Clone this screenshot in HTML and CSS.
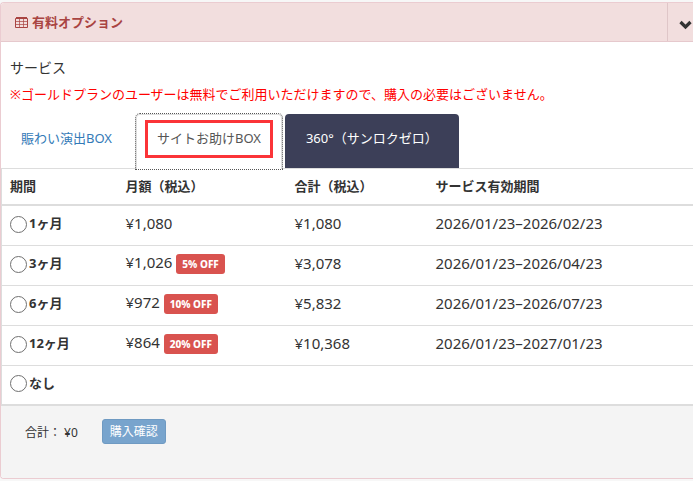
FILE: index.html
```html
<!DOCTYPE html>
<html lang="ja">
<head>
    <meta charset="UTF-8">
    <meta name="viewport" content="width=device-width, initial-scale=1.0">
    <title>有料オプション</title>
    <link rel="stylesheet" href="styles.css">
</head>
<body>

<section class="panel">
    <header class="panel-heading">
        <svg class="icon-table" viewBox="0 0 13 11" width="13" height="11" aria-hidden="true">
            <path fill="none" stroke="currentColor" d="M.5 1.500h12v9H.5z"/>
            <path fill="currentColor" d="M1 0h11v2H1z"/>
            <path fill="none" stroke="currentColor" stroke-opacity=".7" d="M1 4.500h11M1 7.500h11M4.500 1v9M8.500 1v9"/>
        </svg>
        <h1>有料オプション</h1>
        <button type="button" class="toggle" aria-label="開閉">
            <svg viewBox="0 0 14 10" width="14" height="10" aria-hidden="true">
                <path fill="none" stroke="currentColor" stroke-width="3.200" d="M1.500 2L6.500 7 11.500 2"/>
            </svg>
        </button>
    </header>

    <div class="panel-body">
        <p class="lead">サービス</p>
        <p class="notice">※ゴールドプランのユーザーは無料でご利用いただけますので、購入の必要はございません。</p>
    </div>

    <nav class="tabs">
        <a href="#nigiwai" class="tab">賑わい演出BOX</a>
        <a href="#otasuke" class="tab active">サイトお助けBOX</a>
        <a href="#sanrokuzero" class="tab dark">360°（サンロクゼロ）</a>
    </nav>

    <form>
        <table class="plans">
            <thead>
                <tr>
                    <th class="col-term">期間</th>
                    <th class="col-month">月額（税込）</th>
                    <th class="col-total">合計（税込）</th>
                    <th>サービス有効期間</th>
                </tr>
            </thead>
            <tbody>
                <tr>
                    <td><label><input type="radio" name="term" value="1">1ヶ月</label></td>
                    <td>¥1,080</td>
                    <td>¥1,080</td>
                    <td>2026/01/23–2026/02/23</td>
                </tr>
                <tr>
                    <td><label><input type="radio" name="term" value="3">3ヶ月</label></td>
                    <td>¥1,026 <span class="badge">5% OFF</span></td>
                    <td>¥3,078</td>
                    <td>2026/01/23–2026/04/23</td>
                </tr>
                <tr>
                    <td><label><input type="radio" name="term" value="6">6ヶ月</label></td>
                    <td>¥972 <span class="badge">10% OFF</span></td>
                    <td>¥5,832</td>
                    <td>2026/01/23–2026/07/23</td>
                </tr>
                <tr>
                    <td><label><input type="radio" name="term" value="12">12ヶ月</label></td>
                    <td>¥864 <span class="badge">20% OFF</span></td>
                    <td>¥10,368</td>
                    <td>2026/01/23–2027/01/23</td>
                </tr>
                <tr>
                    <td><label><input type="radio" name="term" value="0">なし</label></td>
                    <td></td>
                    <td></td>
                    <td></td>
                </tr>
            </tbody>
        </table>

        <footer class="panel-footer">
            <span>合計： ¥0</span>
            <button type="submit" class="buy" disabled>購入確認</button>
        </footer>
    </form>
</section>

</body>
</html>
```
FILE: styles.css
```css
* {
    box-sizing: border-box;
}
body {
    font-family: "Noto Sans", "Noto Sans CJK JP", sans-serif;
    font-size: 13px;
    line-height: 20px;
    background-color: #f7f7f7;
    color: #333;
    margin: 0;
    padding: 2px 0;
}
.panel {
    background-color: #fff;
    border: 1px solid #ebccd1;
    border-right: none;
    border-radius: 4px 0 0 4px;
    overflow: hidden;
}
.panel-heading {
    display: flex;
    align-items: center;
    gap: 4px;
    height: 39px;
    padding-left: 14px;
    background-color: #f2dede;
    border-bottom: 1px solid #e6c9cd;
    color: #a94442;
}
.panel-heading h1 {
    margin: 0;
    font-size: 13px;
}
.toggle {
    display: flex;
    align-items: center;
    justify-content: flex-end;
    align-self: stretch;
    width: 26px;
    margin-left: auto;
    padding: 6px 0 0;
    background: none;
    border: none;
    border-left: 1px solid #dfc6c8;
    color: #333;
    cursor: pointer;
}
.panel-body {
    padding: 16px 9px 10px;
}
.panel-body p {
    margin: 0;
}
.lead {
    font-size: 14px;
}
.panel-body .notice {
    margin-top: 6px;
    color: #f00;
}
.tabs {
    display: flex;
    gap: 3px;
    border-bottom: 1px solid #ddd;
}
.tab {
    padding: 14px 21px 20px;
    border-radius: 4px 4px 0 0;
    color: #337ab7;
    text-decoration: none;
    white-space: nowrap;
}
.tab:first-child {
    padding-left: 20px;
}
.tab.active {
    position: relative;
    margin-bottom: -1px;
    padding: 13px 20px 20px;
    background-color: #fff;
    border: 1px solid #ddd;
    border-bottom: none;
    outline: 1px dotted #555;
    color: #555;
}
.tab.active::after {
    content: "";
    position: absolute;
    inset: 5px 8px 11px;
    border: 3px solid #fb3438;
}
.tab.dark {
    background-color: #3c3f58;
    color: #fff;
}
.plans {
    width: 100%;
    border-collapse: collapse;
    border-left: 1px solid #ddd;
    border-bottom: 2px solid #ddd;
    table-layout: fixed;
}
.plans th {
    height: 36px;
    padding: 0 8px 2px;
    border-bottom: 2px solid #ddd;
    text-align: left;
}
.plans td {
    height: 40px;
    padding: 0 8px 4px;
    border-top: 1px solid #ddd;
    font-size: 15px;
}
.plans .col-term {
    width: 116px;
}
.plans .col-month {
    width: 169px;
}
.plans .col-total {
    width: 141px;
}
.plans label {
    display: flex;
    align-items: center;
    gap: 2px;
    font-size: 13px;
    font-weight: bold;
}
.plans input {
    appearance: none;
    width: 17px;
    height: 17px;
    margin: 2px 0 0;
    background-color: #fff;
    border: 1px solid #707070;
    border-radius: 50%;
}
.plans input:checked {
    background-color: #333;
    box-shadow: inset 0 0 0 4px #fff;
}
.badge {
    display: inline-block;
    padding: 0 6px;
    background-color: #d9534f;
    border-radius: 3px;
    color: #fff;
    font-size: 10px;
    font-weight: 800;
    vertical-align: middle;
}
.panel-footer {
    display: flex;
    align-items: flex-start;
    gap: 24px;
    min-height: 72px;
    padding: 13px 24px;
    background-color: #f4f4f4;
}
.panel-footer span {
    margin-top: 4px;
    font-size: 12px;
}
.buy {
    padding: 1px 7px;
    background-color: #78a4cd;
    border: 1px solid #6f9ac2;
    border-radius: 3px;
    color: #fff;
    font-family: inherit;
    font-size: 12px;
    line-height: 21px;
}
```
